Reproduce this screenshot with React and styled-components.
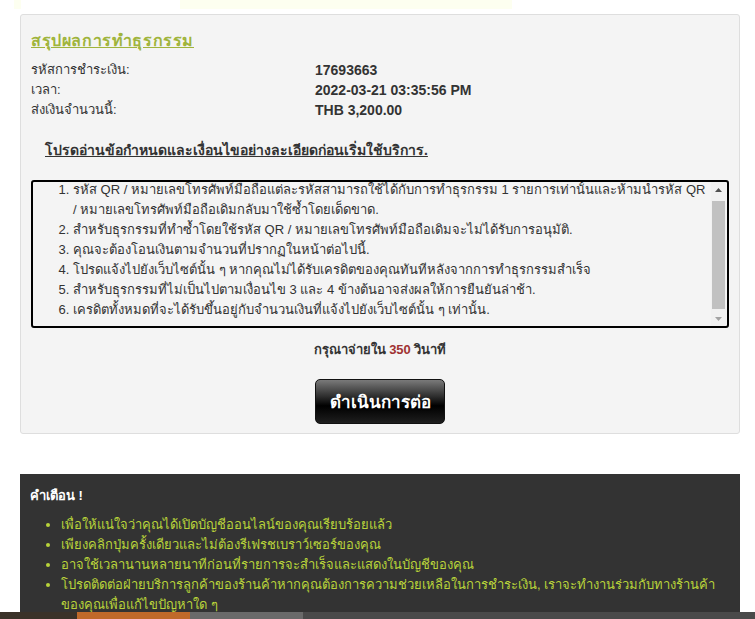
import React, { useEffect, useRef } from "react";
import styled, { createGlobalStyle } from "styled-components";

const GlobalStyle = createGlobalStyle`
  body {
    margin: 0;
    background: #fff;
    font-family: Tahoma, "Liberation Sans", "Noto Sans", sans-serif;
    font-size: 13px;
    color: #333;
  }
`;

const terms = [
  "รหัส QR / หมายเลขโทรศัพท์มือถือแต่ละรหัสสามารถใช้ได้กับการทำธุรกรรม 1 รายการเท่านั้นและห้ามนำรหัส QR / หมายเลขโทรศัพท์มือถือเดิมกลับมาใช้ซ้ำโดยเด็ดขาด.",
  "สำหรับธุรกรรมที่ทำซ้ำโดยใช้รหัส QR / หมายเลขโทรศัพท์มือถือเดิมจะไม่ได้รับการอนุมัติ.",
  "คุณจะต้องโอนเงินตามจำนวนที่ปรากฏในหน้าต่อไปนี้.",
  "โปรดแจ้งไปยังเว็บไซต์นั้น ๆ หากคุณไม่ได้รับเครดิตของคุณทันทีหลังจากการทำธุรกรรมสำเร็จ",
  "สำหรับธุรกรรมที่ไม่เป็นไปตามเงื่อนไข 3 และ 4 ข้างต้นอาจส่งผลให้การยืนยันล่าช้า.",
  "เครดิตทั้งหมดที่จะได้รับขึ้นอยู่กับจำนวนเงินที่แจ้งไปยังเว็บไซต์นั้น ๆ เท่านั้น.",
];

const warnings = [
  "เพื่อให้แน่ใจว่าคุณได้เปิดบัญชีออนไลน์ของคุณเรียบร้อยแล้ว",
  "เพียงคลิกปุ่มครั้งเดียวและไม่ต้องรีเฟรชเบราว์เซอร์ของคุณ",
  "อาจใช้เวลานานหลายนาทีก่อนที่รายการจะสำเร็จและแสดงในบัญชีของคุณ",
  "โปรดติดต่อฝ่ายบริการลูกค้าของร้านค้าหากคุณต้องการความช่วยเหลือในการชำระเงิน, เราจะทำงานร่วมกับทางร้านค้าของคุณเพื่อแก้ไขปัญหาใด ๆ",
];

const footerBands = [
  { color: "#3a3229", width: 77 },
  { color: "#c0692a", width: 113 },
  { color: "#6a6a6a", width: 113 },
  { color: "#4a4a4a", width: 452 },
];

const Arrow = ({ up, color }) => (
  <svg width="7" height="4" viewBox="0 0 7 4">
    <path d={up ? "M0 4 L3.5 0 L7 4 Z" : "M0 0 L3.5 4 L7 0 Z"} fill={color} />
  </svg>
);

const App = () => {
  const termsRef = useRef(null);

  useEffect(() => {
    // the terms box in the screenshot is scrolled down a little
    if (termsRef.current) termsRef.current.scrollTop = 2;
  }, []);

  return (
    <>
      <GlobalStyle />
      <TopStrip>
        <Glow $width={7} $offset={14} />
        <Glow $width={332} $offset={159} />
      </TopStrip>
      <Page>
        <Card>
          <Title>สรุปผลการทำธุรกรรม</Title>
          <InfoGrid>
            <Label>รหัสการชำระเงิน:</Label>
            <Value>17693663</Value>
            <Label>เวลา:</Label>
            <Value>2022-03-21 03:35:56 PM</Value>
            <Label>ส่งเงินจำนวนนี้:</Label>
            <Value>THB 3,200.00</Value>
          </InfoGrid>

          <TermsHeading>โปรดอ่านข้อกำหนดและเงื่อนไขอย่างละเอียดก่อนเริ่มใช้บริการ.</TermsHeading>
          <TermsBox>
            <TermsScroll ref={termsRef}>
              <TermsList>
                {terms.map((t, i) => (
                  <li key={i}>{t}</li>
                ))}
              </TermsList>
            </TermsScroll>
            <ScrollBar>
              <ScrollButton>
                <Arrow up color="#505050" />
              </ScrollButton>
              <ScrollTrack>
                <ScrollThumb />
              </ScrollTrack>
              <ScrollButton>
                <Arrow color="#a3a3a3" />
              </ScrollButton>
            </ScrollBar>
          </TermsBox>

          <Countdown>
            กรุณาจ่ายใน <Seconds>350</Seconds> วินาที
          </Countdown>
          <ButtonRow>
            <ProceedButton type="button">ดำเนินการต่อ</ProceedButton>
          </ButtonRow>
        </Card>

        <Warning>
          <WarningTitle>คำเตือน !</WarningTitle>
          <WarningList>
            {warnings.map((w, i) => (
              <li key={i}>{w}</li>
            ))}
          </WarningList>
        </Warning>
      </Page>
      <FooterStrip>
        {footerBands.map((b, i) => (
          <Band key={i} $color={b.color} $width={b.width} />
        ))}
      </FooterStrip>
    </>
  );
};

const TopStrip = styled.div`
  display: flex;
  height: 9px;
`;

const Glow = styled.div`
  width: ${(p) => p.$width}px;
  margin-left: ${(p) => p.$offset}px;
  background: #fdfff0;
`;

const Page = styled.div`
  padding: 0 15px 0 20px;
`;

const Card = styled.div`
  margin-top: 5px;
  background: #f4f4f4;
  border: 1px solid #dedede;
  border-radius: 3px;
  padding: 15px 10px 9px;
`;

const Title = styled.h3`
  margin: 0 0 8px;
  font-size: 16px;
  letter-spacing: 0.6px;
  font-weight: bold;
  color: #a0b43c;
  text-decoration: underline;
  line-height: 22px;
`;

const InfoGrid = styled.div`
  display: grid;
  grid-template-columns: 284px 1fr;
  line-height: 20px;
`;

const Label = styled.div`
  color: #333;
`;

const Value = styled.div`
  font-size: 14px;
  font-weight: bold;
  color: #333;
`;

const TermsHeading = styled.p`
  margin: 20px 0 0 14px;
  font-size: 14px;
  font-weight: bold;
  text-decoration: underline;
  line-height: 20px;
  color: #333;
`;

const TermsBox = styled.div`
  display: flex;
  margin-top: 20px;
  height: 144px;
  border: 2px solid #000;
  border-radius: 3px;
  background: #f4f4f4;
  overflow: hidden;
`;

const TermsScroll = styled.div`
  flex: 1;
  min-width: 0;
  overflow: hidden;
`;

const TermsList = styled.ol`
  margin: 0;
  padding: 0 4px 12px 40px;
  line-height: 20px;
  color: #333;
`;

const ScrollBar = styled.div`
  display: flex;
  flex-direction: column;
  width: 15px;
  margin-right: 1px;
  background: #f1f1f1;
`;

const ScrollButton = styled.div`
  display: flex;
  align-items: center;
  justify-content: center;
  height: 15px;
`;

const ScrollTrack = styled.div`
  flex: 1;
  padding: 4px 1px 0;
`;

const ScrollThumb = styled.div`
  height: 108px;
  background: #c1c1c1;
`;

const Countdown = styled.p`
  margin: 12px 0 0;
  text-align: center;
  font-weight: bold;
  line-height: 20px;
  color: #333;
`;

const Seconds = styled.span`
  color: #a03232;
`;

const ButtonRow = styled.div`
  display: flex;
  justify-content: center;
  margin-top: 19px;
`;

const ProceedButton = styled.button`
  width: 130px;
  height: 45px;
  border: 1px solid #111;
  border-radius: 5px;
  background: linear-gradient(to bottom, #7a7a7a 0%, #2a2a2a 40%, #000 60%, #1e1e1e 100%);
  color: #fff;
  font-family: inherit;
  font-size: 17px;
  font-weight: bold;
  text-shadow: 0 1px 1px #000;
  cursor: pointer;
`;

const Warning = styled.div`
  margin-top: 40px;
  background: #333;
  padding: 12px 10px 0;
`;

const WarningTitle = styled.h4`
  margin: 0 0 9px;
  color: #fff;
  font-size: 13px;
  font-weight: bold;
  line-height: 20px;
`;

const WarningList = styled.ul`
  margin: 0;
  padding-left: 31px;
  color: #b9d43a;
  line-height: 20px;
`;

const FooterStrip = styled.div`
  position: fixed;
  left: 0;
  right: 0;
  bottom: 0;
  display: flex;
  height: 7px;
`;

const Band = styled.div`
  width: ${(p) => p.$width}px;
  background: ${(p) => p.$color};
`;

export default App;
